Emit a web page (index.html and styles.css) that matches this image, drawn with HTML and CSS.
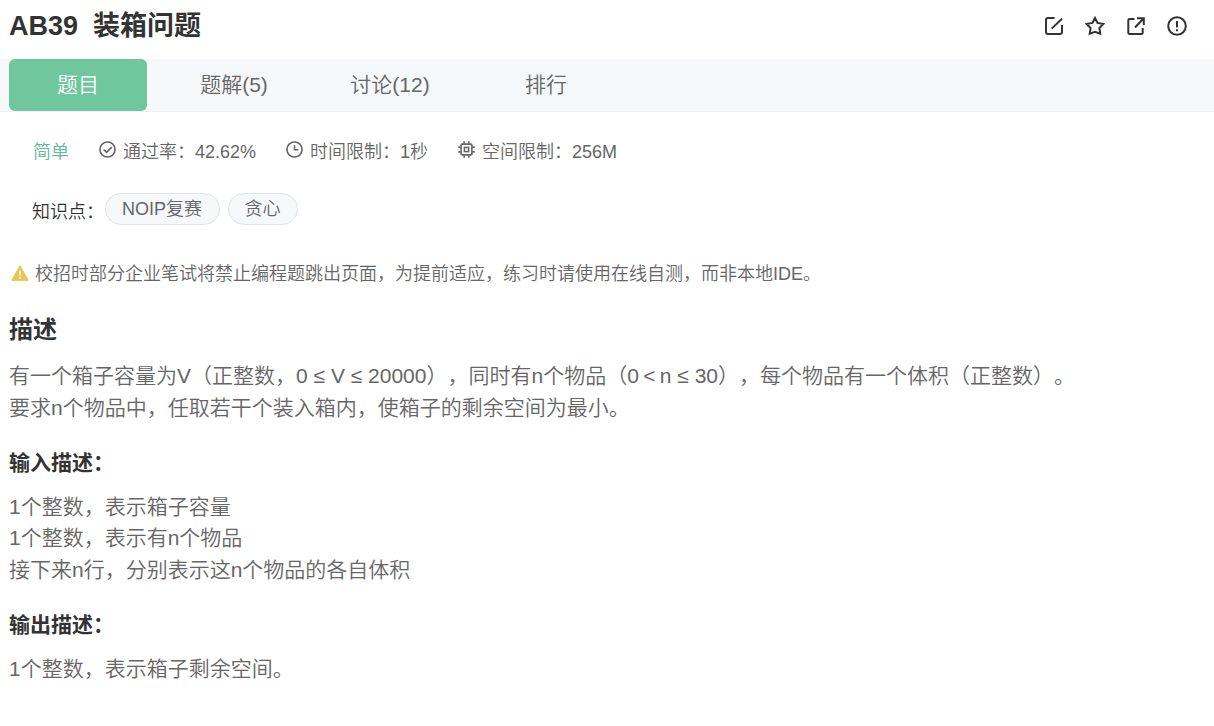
FILE: index.html
```html
<!DOCTYPE html>
<html lang="zh-CN">
<head>
    <meta charset="UTF-8">
    <meta name="viewport" content="width=device-width, initial-scale=1.0">
    <title>AB39 装箱问题</title>
    <link rel="stylesheet" href="styles.css">
</head>
<body>
    <header class="question-header">
        <h1><span>AB39</span><span>装箱问题</span></h1>
        <div class="actions">
            <svg class="action-icon" viewBox="0 0 20 20">
                <path d="M10.500 2H4A2 2 0 0 0 2 4V16A2 2 0 0 0 4 18H16A2 2 0 0 0 18 16V9M7.700 12.600L18 2.800"/>
            </svg>
            <svg class="action-icon" viewBox="0 0 20 20">
                <path d="M10 2L12.500 6.900L18.300 8L14.400 12L15.300 17.700L10 15.900L4.700 17.700L5.600 12L1.700 8L7.500 6.900Z"/>
            </svg>
            <svg class="action-icon" viewBox="0 0 20 20">
                <path d="M8.500 3H3.500A1.200 1.200 0 0 0 2.300 4.200V16.800A1.200 1.200 0 0 0 3.500 18H15.500A1.200 1.200 0 0 0 16.700 16.800V12M11 2.200H17.800V9M17 3L9 11.500"/>
            </svg>
            <svg class="action-icon" viewBox="0 0 20 20">
                <circle cx="10" cy="10" r="8.800"/>
                <path d="M10 5V11.500M10 13.300V15.300"/>
            </svg>
        </div>
    </header>

    <nav class="tabs">
        <a class="tab active">题目</a>
        <a class="tab">题解(5)</a>
        <a class="tab">讨论(12)</a>
        <a class="tab">排行</a>
    </nav>

    <div class="meta">
        <span class="level">简单</span>
        <span class="meta-item">
            <svg class="meta-icon" viewBox="0 0 18 18">
                <circle cx="9" cy="9" r="8"/>
                <path d="M5 9L8 12L13.500 6.500"/>
            </svg>
            通过率：42.62%
        </span>
        <span class="meta-item">
            <svg class="meta-icon" viewBox="0 0 18 18">
                <circle cx="9" cy="9" r="8"/>
                <path d="M9 4.500V9.200H13"/>
            </svg>
            时间限制：1秒
        </span>
        <span class="meta-item">
            <svg class="meta-icon" viewBox="0 0 18 18">
                <rect x="3.300" y="3.300" width="11.400" height="11.400" rx="1"/>
                <rect x="6.800" y="6.800" width="4.400" height="4.400"/>
                <path d="M6.500 .3V3M11.500 .3V3M6.500 15V17.700M11.500 15V17.700M.3 6.500H3M.3 11.500H3M15 6.500H17.700M15 11.500H17.700"/>
            </svg>
            空间限制：256M
        </span>
    </div>

    <div class="tags">
        <span class="tags-label">知识点：</span>
        <span class="tag">NOIP复赛</span>
        <span class="tag">贪心</span>
    </div>

    <div class="notice">
        <svg class="warn-icon" viewBox="0 0 18 16">
            <path class="warn-shape" d="M9 .8L17.300 15.300H.7Z"/>
            <path class="warn-mark" d="M9 5.500V10.500M9 12V13.800"/>
        </svg>
        校招时部分企业笔试将禁止编程题跳出页面，为提前适应，练习时请使用在线自测，而非本地IDE。
    </div>

    <main class="content">
        <h2>描述</h2>
        <p>有一个箱子容量为V（正整数，0 ≤ V ≤ 20000），同时有n个物品（<span class="range">0 &lt; n</span> ≤ 30），每个物品有一个体积（正整数）。<br>要求n个物品中，任取若干个装入箱内，使箱子的剩余空间为最小。</p>

        <h3>输入描述：</h3>
        <p>1个整数，表示箱子容量<br>1个整数，表示有n个物品<br>接下来n行，分别表示这n个物品的各自体积</p>

        <h3>输出描述：</h3>
        <p>1个整数，表示箱子剩余空间。</p>
    </main>
</body>
</html>
```
FILE: styles.css
```css
* {
    margin: 0;
    padding: 0;
    box-sizing: border-box;
}

body {
    font-family: "Liberation Sans", "Noto Sans CJK SC", sans-serif;
    font-size: 21px;
    font-weight: 350;
    color: #666;
    background: #fff;
    text-spacing-trim: space-all;
    overflow: hidden;
}

.question-header {
    display: flex;
    justify-content: space-between;
    height: 59px;
    padding: 6px 27.5px 0 9px;
}

h1 {
    display: flex;
    gap: 15px;
    font-size: 27px;
    line-height: 40px;
    color: #333;
}

.actions {
    display: flex;
    gap: 20.700px;
    padding-top: 9.500px;
}

.action-icon {
    width: 20px;
    height: 20px;
    fill: none;
    stroke: #333;
    stroke-width: 2;
}

.tabs {
    display: flex;
    height: 53px;
    background: #f7f8fa;
    border-bottom: 1px solid #eff0f2;
}

.tab {
    width: 156px;
    line-height: 52px;
    text-align: center;
}

.tab.active {
    width: 138px;
    margin: 0 9px;
    color: #fff;
    background: #70c69d;
    border-radius: 6px;
}

.meta {
    display: flex;
    align-items: center;
    gap: 30px;
    height: 27px;
    margin-top: 27px;
    padding-left: 33px;
    font-size: 18px;
    line-height: 27px;
}

.level {
    color: #5fb99c;
}

.meta-item {
    display: flex;
    align-items: center;
    gap: 7px;
}

.meta-icon {
    width: 17px;
    height: 17px;
    margin-top: -6px;
    fill: none;
    stroke: #666;
    stroke-width: 1.7;
}

.tags {
    display: flex;
    gap: 8px;
    margin-top: 27px;
    padding-left: 32px;
    font-size: 18px;
}

.tags-label {
    width: 65px;
    line-height: 38px;
    white-space: nowrap;
    color: #333;
}

.tag {
    height: 32px;
    padding: 0 16.5px 0 16px;
    line-height: 30px;
    background: #f7f8fa;
    border: 1px solid #e1e3e6;
    border-radius: 16px;
}

.notice {
    display: flex;
    align-items: center;
    gap: 6px;
    height: 27px;
    margin-top: 27px;
    padding-left: 11px;
    font-size: 18px;
}

.warn-icon {
    width: 18px;
    height: 16px;
    margin-top: 2px;
}

.warn-shape {
    fill: #e6c84f;
    stroke: #e6c84f;
    stroke-linejoin: round;
}

.warn-mark {
    stroke: #fff;
    stroke-width: 1.6;
}

.content {
    padding: 27px 9px 0;
}

h2 {
    font-size: 24px;
    line-height: 36px;
    color: #333;
}

h3 {
    margin: 24px 0 12px;
    font-size: 21px;
    line-height: 31.5px;
    color: #333;
}

p {
    line-height: 31.5px;
}

h2 + p {
    margin-top: 12px;
}

.range {
    word-spacing: -1.500px;
}
```
